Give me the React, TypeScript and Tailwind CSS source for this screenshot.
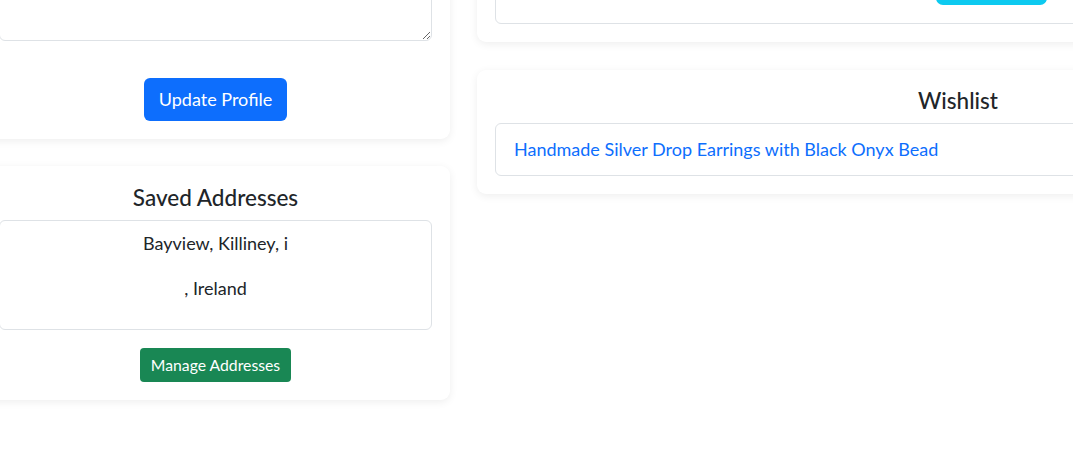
export default function App() {
  return (
    <div className="h-[452px] w-[1073px] overflow-hidden bg-white text-[18px] text-[#212529] font-['Lato','Liberation_Sans',sans-serif]">
      <div className="ml-[-19px] mt-[-60px] flex items-start gap-[27px]">
        {/* Left column */}
        <div className="w-[469px] shrink-0">
          {/* Profile form card (bottom part) */}
          <div className="rounded-[9px] bg-white p-[18px] shadow-[0_2px_8px_rgba(0,0,0,0.07)]">
            <textarea
              className="block h-[83px] w-full rounded-[6px] border border-[#dee2e6] px-3 py-2 text-[18px] outline-none"
              defaultValue=""
            />
            <div className="mt-[37px] flex justify-center">
              <button className="h-[43px] rounded-[6px] bg-[#0d6efd] px-[15px] text-[18px] leading-[27px] text-white">
                Update Profile
              </button>
            </div>
          </div>

          {/* Saved addresses */}
          <div className="mt-[27px] rounded-[9px] bg-white p-[18px] text-center shadow-[0_2px_8px_rgba(0,0,0,0.07)]">
            <h5 className="mb-[9px] text-[22.5px] leading-[27px] font-medium">Saved Addresses</h5>
            <div className="rounded-[6px] border border-[#dee2e6] px-[18px] py-[9px] leading-[27px]">
              <p className="mb-[18px]">Bayview, Killiney, i</p>
              <p className="mb-[18px]">, Ireland</p>
            </div>
            <button className="mt-[18px] h-[34px] rounded-[4px] bg-[#198754] px-[11px] text-[15.75px] leading-[24px] text-white">
              Manage Addresses
            </button>
          </div>
        </div>

        {/* Right column */}
        <div className="w-[962px] shrink-0">
          {/* Orders card (bottom part) */}
          <div className="rounded-[9px] bg-white p-[18px] shadow-[0_2px_8px_rgba(0,0,0,0.07)]">
            <div className="h-[66px] rounded-[6px] border border-[#dee2e6] pl-[440px] pt-[3px]">
              <div className="h-[43px] w-[111px] rounded-[7px] bg-[#0dcaf0]" />
            </div>
          </div>

          {/* Wishlist */}
          <div className="mt-[28px] rounded-[9px] bg-white px-[18px] pb-[18px] pt-[17px] shadow-[0_2px_8px_rgba(0,0,0,0.07)]">
            <h5 className="mb-[9px] text-center text-[22.5px] leading-[27px] font-medium">Wishlist</h5>
            <div className="rounded-[6px] border border-[#dee2e6] px-[18px] py-[12px] leading-[27px]">
              <a href="#" className="text-[#0d6efd]">
                Handmade Silver Drop Earrings with Black Onyx Bead
              </a>
            </div>
          </div>
        </div>
      </div>
    </div>
  );
}
